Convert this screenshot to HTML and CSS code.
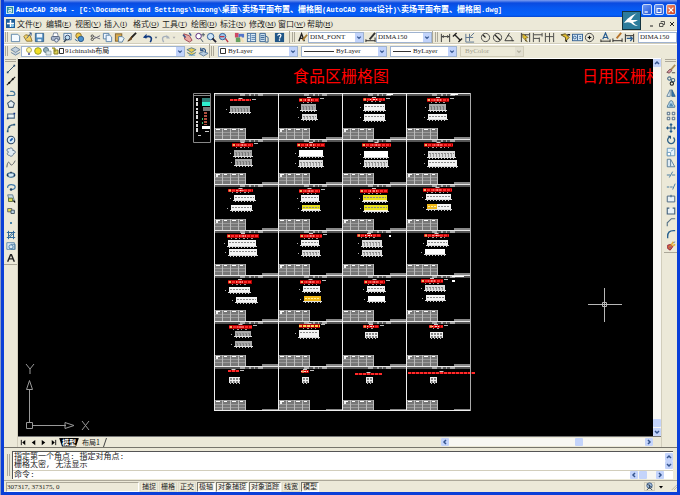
FILE: index.html
```html
<!DOCTYPE html>
<html lang="zh-CN">
<head>
<meta charset="utf-8">
<title>AutoCAD 2004</title>
<link rel="stylesheet" href="styles.css">
</head>
<body>
<div class="window">
  <header class="titlebar">
    <svg class="app-icon" viewBox="0 0 9 9"><rect width="9" height="9" fill="#d9f1f4"/><rect x="1" y="1" width="7" height="7" fill="#2a8fa0"/><path d="M3 3h3v4H3V5h3" fill="none" stroke="#fff"/></svg>
    <h1>AutoCAD 2004 - [C:\Documents and Settings\luzong\<span class="zh">桌面</span>\<span class="zh">卖场平面布置、栅格图</span>(AutoCAD 2004<span class="zh">设计</span>)\<span class="zh">卖场平面布置、栅格图</span>.dwg]</h1>
    <div class="caption-buttons">
      <button aria-label="最小化"><svg viewBox="0 0 10 10"><path d="M2 7.5h4" stroke="#fff" stroke-width="1.6"/></svg></button>
      <button aria-label="最大化"><svg viewBox="0 0 10 10"><path d="M2 3h6M2.500 3v5h5V3" fill="none" stroke="#fff" stroke-width="1.300"/></svg></button>
      <button class="close" aria-label="关闭"><svg viewBox="0 0 10 10"><path d="M2 2l6 6M8 2L2 8" stroke="#fff" stroke-width="1.6"/></svg></button>
    </div>
    <svg class="bird" viewBox="0 0 19 19"><rect width="19" height="19" fill="#14333f"/><rect x="1" y="1" width="17" height="17" fill="#2c7c9c"/><path d="M15 2C8 5 5 8 2 12c3-1 5-1 7 0 2 2 4 3 7 3-2-1-4-2-5-4 2 0 3-1 5-2-3 0-5 0-7 0 2-3 3-5 6-7z" fill="#fff"/></svg>
  </header>

  <nav class="menubar">
    <svg class="doc-icon" viewBox="0 0 9 9"><rect width="9" height="9" fill="#1f5f9c"/><path d="M4.500 1v7M1 4.500h7" stroke="#fff" stroke-width="1.500"/><circle cx="6.500" cy="6.500" r="1.500" fill="#8fd0f0"/></svg>
    <button>文件<i>(<u>F</u>)</i></button><button>编辑<i>(<u>E</u>)</i></button><button>视图<i>(<u>V</u>)</i></button><button>插入<i>(<u>I</u>)</i></button><button>格式<i>(<u>O</u>)</i></button><button>工具<i>(<u>T</u>)</i></button><button>绘图<i>(<u>D</u>)</i></button><button>标注<i>(<u>N</u>)</i></button><button>修改<i>(<u>M</u>)</i></button><button>窗口<i>(<u>W</u>)</i></button><button>帮助<i>(<u>H</u>)</i></button>
    <div class="doc-buttons">
      <button aria-label="最小化文档"><svg viewBox="0 0 6 6"><path d="M1 5h3" stroke="#222"/></svg></button>
      <button aria-label="还原文档"><svg viewBox="0 0 6 6"><path d="M2 1.500V.5h3.500v3H4M.5 2.500H4v3H.5z" fill="none" stroke="#333" stroke-width=".8"/></svg></button>
      <button aria-label="关闭文档"><svg viewBox="0 0 6 6"><path d="M1 1l4 4M5 1L1 5" stroke="#222"/></svg></button>
    </div>
  </nav>

  <div class="toolrow">
    <div class="toolbar standard">
      <span class="grip"></span>
      <button aria-label="新建"><svg viewBox="0 0 12 12"><path d="M1.500 2.500h7l2 2v6h-9z" fill="#f4faff" stroke="#5b83a8"/></svg></button>
      <button aria-label="打开"><svg viewBox="0 0 12 12"><path d="M2 5l2-2 5 1 2 6H5z" fill="#f3d267" stroke="#8d7432"/><path d="M5 7l5-6M8 1h2v3" fill="none" stroke="#3a5a87"/></svg></button>
      <button aria-label="保存"><svg viewBox="0 0 12 12"><path d="M1.500 1.500h9v9h-9z" fill="#4f8cc0" stroke="#36628e"/><path d="M3 2h6v4H3zM4 8h4v2H4z" fill="#eef6fc"/></svg></button>
      <span class="sep"></span>
      <button aria-label="打印"><svg viewBox="0 0 12 12"><path d="M4 1h4l1 4H3z" fill="#fff" stroke="#7b8aa0"/><rect x="1.500" y="5" width="9" height="4" rx="1" fill="#aab8cf" stroke="#52617c"/><circle cx="7" cy="9" r="2" fill="#dce6f4" stroke="#52617c"/></svg></button>
      <button aria-label="打印预览"><svg viewBox="0 0 12 12"><path d="M2 1.500h8v7H2z" fill="#eaf4fc" stroke="#527ca4"/><circle cx="6" cy="6" r="2.500" fill="#bfe0f4" stroke="#346"/><path d="M5 8l-3 3" stroke="#345" stroke-width="1.500"/></svg></button>
      <button aria-label="发布"><svg viewBox="0 0 12 12"><circle cx="5" cy="4" r="3" fill="#edc84a" stroke="#8a6a28"/><circle cx="7.500" cy="7.500" r="3" fill="#4b91cc" stroke="#29598c"/><path d="M1 8l3 2" stroke="#258"/></svg></button>
      <span class="sep"></span>
      <button aria-label="剪切"><svg viewBox="0 0 12 12"><path d="M11 4L4 7.500M11 7.500L4 5" stroke="#667" fill="none"/><circle cx="2.500" cy="4.500" r="1.300" fill="none" stroke="#444"/><circle cx="2.500" cy="8" r="1.300" fill="none" stroke="#444"/></svg></button>
      <button aria-label="复制"><svg viewBox="0 0 12 12"><path d="M1.500 1.500h6v6h-6z" fill="#eef6ff" stroke="#5680a8"/><path d="M4.500 3.500h4l2 2v5h-6z" fill="#eef6ff" stroke="#5680a8"/></svg></button>
      <button aria-label="粘贴"><svg viewBox="0 0 12 12"><rect x="1.500" y="2" width="7" height="8" fill="#d7a94d" stroke="#7e602f"/><path d="M5 5h4l2 2-2 4H5z" fill="#e9f4fb" stroke="#5a7f9f"/></svg></button>
      <button aria-label="特性匹配"><svg viewBox="0 0 12 12"><path d="M11 1L6 6" stroke="#222" stroke-width="2"/><path d="M6 5L2 10l4-2z" fill="#6b4720" stroke="#5b3a15"/></svg></button>
      <span class="sep"></span>
      <button aria-label="放弃"><svg viewBox="0 0 12 12"><path d="M9 11c3-5 0-8-6-5" fill="none" stroke="#123b80" stroke-width="1.800"/><path d="M1 6l4-4v5z" fill="#123b80"/></svg></button>
      <button class="drop" aria-label="放弃列表"><svg viewBox="0 0 12 12"><path d="M4 5h4L6 8z" fill="#567"/></svg></button>
      <button aria-label="重做"><svg viewBox="0 0 12 12"><path d="M4 11c-3-5 0-8 6-5" fill="none" stroke="#a7b0bb" stroke-width="1.500"/><path d="M11 7L7 3v4z" fill="#a7b0bb"/></svg></button>
      <button class="drop" aria-label="重做列表"><svg viewBox="0 0 12 12"><path d="M4 5h4L6 8z" fill="#aaa"/></svg></button>
      <span class="sep"></span>
      <button aria-label="实时平移"><svg viewBox="0 0 12 12"><path d="M2 2l6 2 3 5-3 2-5-3z" fill="#e8a9a2" stroke="#9d4352"/><path d="M1 3l3 3M8 1l2 3" stroke="#35558a" stroke-width="1.500"/></svg></button>
      <button aria-label="实时缩放"><svg viewBox="0 0 12 12"><circle cx="5" cy="4.500" r="3" fill="#fff" stroke="#527"/><path d="M7 7l3 4M10 1v4M8 3h4" stroke="#456"/></svg></button>
      <button aria-label="窗口缩放"><svg viewBox="0 0 12 12"><circle cx="5" cy="5" r="3.500" fill="#cfe6f8" stroke="#2b5a93"/><path d="M7 7l4 4" stroke="#223" stroke-width="2"/></svg></button>
      <button aria-label="缩放上一个"><svg viewBox="0 0 12 12"><circle cx="5" cy="5" r="3.500" fill="#9bc4e8" stroke="#2b5a93"/><path d="M8 7l3 4M2 5h5" stroke="#b34" stroke-width="1.500"/></svg></button>
      <span class="sep"></span>
      <button aria-label="特性"><svg viewBox="0 0 12 12"><path d="M1 1h4v5H1z" fill="#cf4965"/><path d="M5 2h6v4H5z" fill="#5376ca"/><path d="M2 6h5v5H2z" fill="#65a060"/><path d="M7 5l3 6" stroke="#f1dfb6" stroke-width="2"/></svg></button>
      <button aria-label="设计中心"><svg viewBox="0 0 12 12"><rect x="1.500" y="1.500" width="9" height="9" fill="#deedf8" stroke="#3d6998"/><path d="M5 2v9M6 4h4M6 6h4M6 8h4M2 4h2M2 7h2" stroke="#527caa"/></svg></button>
      <button aria-label="工具选项板"><svg viewBox="0 0 12 12"><path d="M2 1.500h6v9H2z" fill="#cfe3f2" stroke="#315e8c"/><path d="M3 4h4M3 6h4M3 8h4M8 4l3 2v5H8" fill="none" stroke="#315e8c"/></svg></button>
      <span class="sep"></span>
      <button aria-label="帮助"><svg viewBox="0 0 12 12"><rect x="1" y="1" width="10" height="10" fill="#205687"/><path d="M4 4c1-3 5-1 3 1L6 7M6 8v1.500" fill="none" stroke="#fff" stroke-width="1.400"/></svg></button>
    </div>
    <div class="toolbar styles">
      <span class="grip"></span>
      <button aria-label="文字样式"><svg viewBox="0 0 12 12"><path d="M2 10L5 2l3 8M3 7h4" fill="none" stroke="#222" stroke-width="1.500"/><path d="M11 3L6 9" stroke="#a77b30" stroke-width="2"/></svg></button>
      <label class="combo"><select aria-label="文字样式"><option>DIM_FONT</option></select><svg class="arrow" viewBox="0 0 9 9"><path d="M2.500 3.500l2 2 2-2" fill="none" stroke="#3b5c94" stroke-width="1.500"/></svg></label>
      <button aria-label="标注样式"><svg viewBox="0 0 12 12"><path d="M1 9.500h10M1 8v3M11 6v5" stroke="#222"/><path d="M11 1L5 8" stroke="#333" stroke-width="2"/></svg></button>
      <label class="combo"><select aria-label="标注样式"><option>DIMA150</option></select><svg class="arrow" viewBox="0 0 9 9"><path d="M2.500 3.500l2 2 2-2" fill="none" stroke="#3b5c94" stroke-width="1.500"/></svg></label>
    </div>
    <div class="toolbar dims">
      <span class="grip"></span>
      <button aria-label="线性标注"><svg viewBox="0 0 12 12"><path d="M1.500 2v9M10.500 2v9M2 5h8M4 3.500L2.500 5 4 6.500M8 3.500L9.500 5 8 6.500" fill="none" stroke="#333"/></svg></button>
      <button aria-label="对齐标注"><svg viewBox="0 0 12 12"><path d="M3 3l6 6M1 5l4-4M7 11l4-4" stroke="#222" stroke-width="1.500"/></svg></button>
      <button aria-label="坐标标注"><svg viewBox="0 0 12 12"><path d="M2 2v9h9M2 6h8M6 2v8M7 5l4-4" fill="none" stroke="#56708c"/></svg></button>
      <span class="sep"></span>
      <button aria-label="半径标注"><svg viewBox="0 0 12 12"><circle cx="6" cy="6" r="4.500" fill="none" stroke="#444"/><path d="M6 6L3 3" stroke="#222" stroke-width="1.400"/></svg></button>
      <button aria-label="直径标注"><svg viewBox="0 0 12 12"><circle cx="6" cy="6" r="4.500" fill="none" stroke="#444"/><path d="M3 3l6 6" stroke="#222" stroke-width="1.400"/></svg></button>
      <button aria-label="角度标注"><svg viewBox="0 0 12 12"><path d="M6 1L1 9.500h10M4 4c3 0 5 2 5 6" fill="none" stroke="#333"/></svg></button>
      <span class="sep"></span>
      <button aria-label="快速标注"><svg viewBox="0 0 12 12"><path d="M1.500 1v10M10.500 1v10M2 3h8M6 3v7" stroke="#333"/><path d="M3 2l6 4-3 1 2 4-5-5z" fill="#e1bd31" stroke="#554a20" stroke-width=".6"/></svg></button>
      <button aria-label="基线标注"><svg viewBox="0 0 12 12"><path d="M1.500 1v10M2 3h9M2 7h6M8 6v5M11 1v4" fill="none" stroke="#444"/></svg></button>
      <button aria-label="连续标注"><svg viewBox="0 0 12 12"><path d="M1.500 1v10M6 1v10M10.500 1v10M2 5h8" stroke="#444"/></svg></button>
      <span class="sep"></span>
      <button aria-label="快速引线"><svg viewBox="0 0 12 12"><path d="M1 3l5-1 4 4-4 4V6z" fill="#e1bd31" stroke="#554a20"/><path d="M8 3h3M7 9v2" stroke="#222" stroke-width="1.500"/></svg></button>
      <button aria-label="公差"><svg viewBox="0 0 12 12"><rect x=".5" y="2.500" width="11" height="7" fill="#d6e9f7" stroke="#335f91"/><circle cx="3" cy="6" r="1.500" fill="none" stroke="#335f91"/><path d="M6 3v6M8 5h2M8 7h2" stroke="#335f91"/></svg></button>
      <button aria-label="圆心标记"><svg viewBox="0 0 12 12"><circle cx="6" cy="6" r="4.500" fill="none" stroke="#444"/><path d="M6 4v4M4 6h4" stroke="#111" stroke-width="1.300"/></svg></button>
      <span class="sep"></span>
      <button aria-label="编辑标注"><svg viewBox="0 0 12 12"><path d="M3 8l3-7 3 7M4 6h4" fill="none" stroke="#285c91" stroke-width="1.300"/><path d="M1 8v3M11 8v3M1 10h10" stroke="#222"/></svg></button>
      <button aria-label="编辑标注文字"><svg viewBox="0 0 12 12"><path d="M10 1L5 7" stroke="#b7742d" stroke-width="2"/><path d="M1 7v4M11 7v4M1 9.500h10" stroke="#222"/></svg></button>
      <button aria-label="标注更新"><svg viewBox="0 0 12 12"><path d="M1.500 2v9M10.500 2v9M2 4h8" stroke="#222"/><path d="M3 7h6M7 5l2 2-2 3" fill="none" stroke="#285c91" stroke-width="1.500"/></svg></button>
      <label class="combo last"><select aria-label="标注样式控制"><option>DIMA150</option></select></label>
    </div>
  </div>

  <div class="toolrow props">
    <div class="toolbar layers">
      <span class="grip"></span>
      <button aria-label="图层特性"><svg viewBox="0 0 12 12"><path d="M1 4l5-3 5 3-5 3zM1 7l5 3 5-3" fill="#c0cfdc" stroke="#70879c"/></svg></button>
      <label class="combo">
        <svg class="layer-state" viewBox="0 0 40 10"><circle cx="5" cy="4" r="2.500" fill="#fff8a2" stroke="#a39642" stroke-width=".8"/><path d="M4 7h2v2H4z" fill="#77a"/><circle cx="14" cy="5" r="3.300" fill="#f2df26" stroke="#97a023"/><circle cx="22" cy="4" r="2.500" fill="#95b3bf" stroke="#5e7986"/><path d="M22 5h5v4h-5z" fill="#dce7e9" stroke="#7e9296" stroke-width=".7"/><path d="M28 2h3v4M30 4h4v4h-4z" fill="#dcd258" stroke="#867d25"/><path d="M35.500 2.500h4v5h-4z" fill="#fff" stroke="#333"/></svg>
        <select aria-label="图层"><option>91chinalsh布局</option></select><svg class="arrow" viewBox="0 0 9 9"><path d="M2.500 3.500l2 2 2-2" fill="none" stroke="#3b5c94" stroke-width="1.500"/></svg></label>
      <button aria-label="将对象的图层置为当前"><svg viewBox="0 0 12 12"><path d="M1 4l5-2 5 2-5 3zM1 7l5 3 5-3" fill="#e8cd54" stroke="#557b92"/><path d="M3 10h7" stroke="#5c9cc6"/></svg></button>
      <button aria-label="上一个图层"><svg viewBox="0 0 12 12"><path d="M1 8l5-2 5 2-5 3z" fill="#b6cce0" stroke="#637f9a"/><path d="M8 7c1-4-2-5-4-3M3 2v3h3" fill="none" stroke="#2d5588" stroke-width="1.300"/></svg></button>
    </div>
    <div class="toolbar object-props">
      <span class="grip"></span>
      <label class="combo color"><svg class="swatch" viewBox="0 0 7 7"><path d="M.5.5h5v5h-5z" fill="#fff" stroke="#333"/></svg><select aria-label="颜色"><option>ByLayer</option></select><svg class="arrow" viewBox="0 0 9 9"><path d="M2.500 3.500l2 2 2-2" fill="none" stroke="#3b5c94" stroke-width="1.500"/></svg></label>
      <label class="combo linetype"><span class="rule"></span><select aria-label="线型"><option>ByLayer</option></select><svg class="arrow" viewBox="0 0 9 9"><path d="M2.500 3.500l2 2 2-2" fill="none" stroke="#3b5c94" stroke-width="1.500"/></svg></label>
      <label class="combo weight"><span class="rule"></span><select aria-label="线宽"><option>ByLayer</option></select><svg class="arrow" viewBox="0 0 9 9"><path d="M2.500 3.500l2 2 2-2" fill="none" stroke="#3b5c94" stroke-width="1.500"/></svg></label>
      <label class="combo disabled"><select aria-label="打印样式" disabled><option>ByColor</option></select><svg class="arrow" viewBox="0 0 9 9"><path d="M2.500 3.500l2 2 2-2" fill="none" stroke="#b5b2a0" stroke-width="1.500"/></svg></label>
    </div>
  </div>

  <main class="workspace">
    <aside class="dock draw">
      <div class="palette">
        <span class="hgrip"></span>
        <button aria-label="直线"><svg viewBox="0 0 12 12"><path d="M2 10l8-8" stroke="#35556f" stroke-width="1.200"/><path d="M1 10h2M9 2h2" stroke="#246" stroke-width="2"/></svg></button>
        <button aria-label="构造线"><svg viewBox="0 0 12 12"><path d="M1 11L11 1" stroke="#222" stroke-width="1.400"/><circle cx="4" cy="8" r="1.200"/><circle cx="8" cy="4" r="1.200"/></svg></button>
        <button aria-label="多段线"><svg viewBox="0 0 12 12"><path d="M1 9h7c4 0 3-4 0-5H5" fill="none" stroke="#45789b" stroke-width="1.400"/><circle cx="2" cy="9" r="1.200" fill="#246"/></svg></button>
        <button aria-label="正多边形"><svg viewBox="0 0 12 12"><path d="M6 2l4 3-1.500 5h-5L2 5z" fill="#e4edf2" stroke="#3f566c" stroke-width="1.300"/></svg></button>
        <button aria-label="矩形"><svg viewBox="0 0 12 12"><path d="M2 3.500h8v5H2z" fill="#e8f2f7" stroke="#486580" stroke-width="1.300"/><path d="M1 9h2M9 3h2" stroke="#138" stroke-width="2"/></svg></button>
        <button aria-label="圆弧"><svg viewBox="0 0 12 12"><path d="M2 10c0-5 3-8 8-8" fill="none" stroke="#3c6486" stroke-width="1.400"/><path d="M1 10h2M9 2h2M3 5h2" stroke="#257" stroke-width="2"/></svg></button>
        <button aria-label="圆"><svg viewBox="0 0 12 12"><circle cx="6" cy="6" r="4.500" fill="#dcedf8" stroke="#324b67" stroke-width="1.300"/><path d="M5 7l3-3" stroke="#1759ac" stroke-width="2"/></svg></button>
        <button aria-label="修订云线"><svg viewBox="0 0 12 12"><path d="M3 6C0 5 1 1 4 2c2-2 5 0 4 2 4 0 4 4 1 4 0 3-4 4-5 2-3 0-3-3-1-4z" fill="#e1ecf3" stroke="#60788f" stroke-width="1.200"/></svg></button>
        <button aria-label="样条曲线"><svg viewBox="0 0 12 12"><path d="M1 10c1-9 3-6 4-4s3 2 6-4" fill="none" stroke="#5e6468" stroke-width="1.200"/></svg></button>
        <button aria-label="椭圆"><svg viewBox="0 0 12 12"><ellipse cx="6" cy="6" rx="4.500" ry="2.700" fill="#d4e9f6" stroke="#275a80" stroke-width="1.300"/><path d="M1 6h2M9 6h2M6 2v2" stroke="#124" stroke-width="1.500"/></svg></button>
        <button aria-label="椭圆弧"><svg viewBox="0 0 12 12"><path d="M2 7c-1-5 9-5 9-1 0 3-3 3-5 3" fill="none" stroke="#4079a8" stroke-width="1.500"/><circle cx="6" cy="9" r="1.500" fill="#246"/></svg></button>
        <button aria-label="插入块"><svg viewBox="0 0 12 12"><path d="M2 1h6l2 7H4z" fill="#cbdde6" stroke="#547288"/><path d="M3 5h5v4H3z" fill="#ddd854" stroke="#4b6030"/><path d="M8 8l3 3V8z"/></svg></button>
        <button aria-label="创建块"><svg viewBox="0 0 12 12"><path d="M2 3h5v4H2z" fill="#e5de4f" stroke="#556"/><path d="M6 5h4v4H6z" fill="#b9d2e1" stroke="#345"/></svg></button>
        <button aria-label="点"><svg viewBox="0 0 12 12"><circle cx="6" cy="6" r="1.200" fill="#15659d"/></svg></button>
        <button aria-label="图案填充"><svg viewBox="0 0 12 12"><path d="M3 1v10M9 1v10M1 3h10M1 9h10M3 8l5-5M4 9l5-5" stroke="#326b9b" stroke-width="1.200"/></svg></button>
        <button aria-label="面域"><svg viewBox="0 0 12 12"><path d="M1 2h9v8H1z" fill="#dbeaf4" stroke="#517fa5"/><circle cx="6" cy="7" r="2.500" fill="none" stroke="#356d9d"/><path d="M6 4h5v6H6" fill="none" stroke="#517fa5"/></svg></button>
        <button aria-label="多行文字"><svg viewBox="0 0 12 12"><path d="M2 10.500L5.500 2h1L10 10.500M4 7h4" fill="none" stroke="#222" stroke-width="1.700"/></svg></button>
      </div>
    </aside>

    <section class="document">
      <div class="view">
        <svg id="model" class="model" viewBox="18 59 635 379" preserveAspectRatio="xMinYMin slice">
          <text class="caption" x="293" y="82">食品区栅格图</text>
          <text class="caption" x="582" y="82">日用区栅格图</text>
          <g id="sheets"></g>
          <g class="ucs"><path d="M26.500 422.500h6v6h-6zM29.500 422V389M33 425.500h33M26.500 389.500l3-9 3 9zM65 422.500l9 3-9 3z"/><path d="M26 364l4 5 4-5M30 369v5M82 421l7 9M89 421l-7 9"/></g>
          <path class="cursor" d="M588 304.500h34M604.500 288v34M602.500 302.500h4v4h-4z"/>
        </svg>
        <div class="vscroll"><button class="sb" aria-label="向上"><svg viewBox="0 0 8 8"><path d="M2 5l2-2 2 2" fill="none" stroke="#35558f" stroke-width="1.500"/></svg></button><span class="fill"></span><button class="sb thumb" aria-label="滑块"></button><button class="sb" aria-label="向下"><svg viewBox="0 0 8 8"><path d="M2 3l2 2 2-2" fill="none" stroke="#35558f" stroke-width="1.500"/></svg></button></div>
      </div>
      <div class="tabs">
        <button class="nav" aria-label="第一个"><svg viewBox="0 0 8 8"><path d="M1.500 1v6" stroke="#000"/><path d="M6 1v6L2.500 4z"/></svg></button>
        <button class="nav" aria-label="上一个"><svg viewBox="0 0 8 8"><path d="M6 1v6L2 4z"/></svg></button>
        <button class="nav" aria-label="下一个"><svg viewBox="0 0 8 8"><path d="M2 1v6l4-3z"/></svg></button>
        <button class="nav" aria-label="最后一个"><svg viewBox="0 0 8 8"><path d="M6.500 1v6" stroke="#000"/><path d="M2 1v6l3.500-3z"/></svg></button>
        <button class="tab active">模型</button><button class="tab">布局1</button><svg class="tab-edge" viewBox="0 0 4 9"><path d="M3.500 0L.5 9" stroke="#444"/></svg>
        <div class="hscroll"><button class="sb" aria-label="向左"><svg viewBox="0 0 8 8"><path d="M5 2L3 4l2 2" fill="none" stroke="#35558f" stroke-width="1.500"/></svg></button><span class="before"></span><button class="sb thumb" aria-label="滑块"></button><span class="after"></span><button class="sb" aria-label="向右"><svg viewBox="0 0 8 8"><path d="M3 2l2 2-2 2" fill="none" stroke="#35558f" stroke-width="1.500"/></svg></button></div>
      </div>
    </section>

    <aside class="dock modify">
      <div class="palette">
        <span class="hgrip"></span>
        <button aria-label="删除"><svg viewBox="0 0 12 12"><path d="M11 1L5 8" stroke="#a68d58" stroke-width="2"/><path d="M5 6l2 2-3 3-3-1z" fill="#d5929b" stroke="#6b4349"/><path d="M7 10.500h4" stroke="#333"/></svg></button>
        <button aria-label="复制对象"><svg viewBox="0 0 12 12"><circle cx="4" cy="3" r="2" fill="none" stroke="#456b89" stroke-width="1.300"/><circle cx="8.500" cy="5" r="2" fill="none" stroke="#456b89" stroke-width="1.300"/><circle cx="7" cy="9" r="2" fill="none" stroke="#222" stroke-width="1.300"/></svg></button>
        <button aria-label="镜像"><svg viewBox="0 0 12 12"><path d="M5 2v8H1z" fill="#f2f7f9" stroke="#4d7796"/><path d="M7 2v8h4z" fill="#367db3" stroke="#295780"/></svg></button>
        <button aria-label="偏移"><svg viewBox="0 0 12 12"><path d="M1.500 10c0-4 2-3 2-5 1-4 5-4 5 0 0 2 3 2 2 5z" fill="#b5d6e9" stroke="#426d8c"/><path d="M4 9c0-2 1-4 2-4s2 2 3 4z" fill="#528bb4"/></svg></button>
        <button aria-label="阵列"><svg viewBox="0 0 12 12"><path d="M1.500 1.500h3v3h-3zM7.500 1.500h3v3h-3zM1.500 7.500h3v3h-3zM7.500 7.500h3v3h-3z" fill="#eef4f8" stroke="#3b5974"/></svg></button>
        <button aria-label="移动"><svg viewBox="0 0 12 12"><path d="M6 1v10M1 6h10M4.500 2.500L6 1l1.500 1.500M4.500 9.500L6 11l1.500-1.500M2.500 4.500L1 6l1.500 1.500M9.500 4.500L11 6 9.500 7.500" fill="none" stroke="#255b87" stroke-width="1.300"/></svg></button>
        <button aria-label="旋转"><svg viewBox="0 0 12 12"><path d="M4 2.500A4.200 4.200 0 1 0 9 3" fill="none" stroke="#2d6187" stroke-width="1.600"/><path d="M2 1h4v4z" fill="#234f75"/></svg></button>
        <button aria-label="缩放"><svg viewBox="0 0 12 12"><path d="M1.500 1.500h9v9h-9z" fill="#e8f4fb" stroke="#578eb6"/><path d="M1.500 6.500h4v4h-4z" fill="#fff" stroke="#578eb6"/><path d="M6 5l3-2" stroke="#578eb6"/></svg></button>
        <button aria-label="拉伸"><svg viewBox="0 0 12 12"><path d="M1.500 1.500h4l5 9h-9z" fill="#dfebf2" stroke="#4b718f"/><path d="M5.500 2v8" stroke="#4b718f"/></svg></button>
        <button aria-label="修剪"><svg viewBox="0 0 12 12"><path d="M1 6h4M7 6h4M4 9l4-7" stroke="#4f80a3" stroke-width="1.200"/></svg></button>
        <button aria-label="延伸"><svg viewBox="0 0 12 12"><path d="M1 6h3M5 6h3M8 9l3-7" stroke="#4f80a3" stroke-width="1.200"/></svg></button>
        <button aria-label="打断于点"><svg viewBox="0 0 12 12"><path d="M1.500 2.500h9v7h-9z" fill="#e9f1f5" stroke="#526c84" stroke-width="1.200"/><path d="M6 1v3" stroke="#258"/></svg></button>
        <button aria-label="打断"><svg viewBox="0 0 12 12"><path d="M4 2.500H1.500v7h9v-7H8" fill="#e9f1f5" stroke="#415f7b" stroke-width="1.300"/></svg></button>
        <button aria-label="倒角"><svg viewBox="0 0 12 12"><path d="M1.500 11V7l5-5H11" fill="none" stroke="#536f85" stroke-width="1.300"/></svg></button>
        <button aria-label="圆角"><svg viewBox="0 0 12 12"><path d="M2 11V9c0-5 2-7 7-7h2" fill="none" stroke="#28618f" stroke-width="1.600"/></svg></button>
        <button aria-label="分解"><svg viewBox="0 0 12 12"><path d="M2 5l4-1 2 3-3 4-3-2z" fill="#d96c3f" stroke="#813"/><path d="M6 5l3-4M8 6l3-2" stroke="#e0b13a" stroke-width="2"/><path d="M9 2l2-1M4 8h2" stroke="#46a"/></svg></button>
      </div>
    </aside>
  </main>

  <section class="command">
    <span class="grip"></span>
    <div class="console">
      <div class="history"><p>指定第一个角点: 指定对角点:<br>栅格太密, 无法显示</p><div class="mini"><button class="sb" aria-label="上滚"><svg viewBox="0 0 8 8"><path d="M2 5l2-2 2 2" fill="none" stroke="#35558f" stroke-width="1.500"/></svg></button><button class="sb" aria-label="下滚"><svg viewBox="0 0 8 8"><path d="M2 3l2 2 2-2" fill="none" stroke="#35558f" stroke-width="1.500"/></svg></button></div></div>
      <div class="prompt"><label for="cmd">命令:</label><input id="cmd" type="text"><div class="mini-h"><button class="sb" aria-label="左滚"><svg viewBox="0 0 8 8"><path d="M5 2L3 4l2 2" fill="none" stroke="#35558f" stroke-width="1.500"/></svg></button><button class="sb thumb" aria-label="滑块"></button><span class="fill"></span><button class="sb" aria-label="右滚"><svg viewBox="0 0 8 8"><path d="M3 2l2 2-2 2" fill="none" stroke="#35558f" stroke-width="1.500"/></svg></button></div></div>
    </div>
  </section>

  <footer class="status">
    <output>307317, 373175, 0</output>
    <div class="modes"><button>捕捉</button><button>栅格</button><button>正交</button><button class="on">极轴</button><button class="on">对象捕捉</button><button class="on">对象追踪</button><button>线宽</button><button class="on">模型</button></div>
    <button class="tray" aria-label="通讯中心"><svg viewBox="0 0 10 10"><circle cx="5" cy="4" r="3" fill="#a9c3df" stroke="#3a5a87"/><path d="M5 3v4M2 9l3-3 3 3M2 2l6 4" fill="none" stroke="#345"/></svg></button>
    <button class="tray-menu" aria-label="状态栏菜单"><svg viewBox="0 0 6 6"><path d="M1 2h4L3 4.500z"/></svg></button>
    <svg class="resize" viewBox="0 0 8 8"><path d="M1 8l7-7M4 8l4-4" stroke="#aaa58e"/></svg>
  </footer>
</div>
<script src="drawing.js"></script>
</body>
</html>
```

FILE: styles.css
```css
:root {
  --face: #ece9d8;
  --edge: #aca899;
  --frame: #0a3fd8;
  --zh: "Liberation Mono", "Noto Sans CJK SC", monospace;
  --small: "Liberation Serif", "Noto Sans CJK SC", serif;
}

* { box-sizing: border-box; }

body {
  margin: 0;
  background: #8d9cc4;
  color: #222;
  font: 8px/8px var(--zh);
}

button {
  padding: 0;
  border: 0;
  background: none;
  color: inherit;
  font: inherit;
  display: flex;
  align-items: center;
  justify-content: center;
}

svg { display: block; }

.window {
  display: flex;
  flex-direction: column;
  height: 100vh;
  margin-left: 1px;
  border: solid var(--frame);
  border-width: 0 3px 3px;
  background: var(--face);
}

/* Title and menu */
.titlebar {
  position: relative;
  display: flex;
  align-items: center;
  gap: 2px;
  height: 17px;
  flex: none;
  padding: 2px 1px 0 2px;
  background: linear-gradient(#7d9df0 0, #0a4be0 3px, #0858f0 8px, #0560fa 15px, #0846d0 17px);
  color: #fff;
}
.app-icon { width: 8px; height: 8px; }
.titlebar h1 {
  flex: 1;
  margin: 0;
  font: bold 7px/12px "Liberation Mono", monospace;
  white-space: pre;
}
.titlebar .zh { font: bold 8px/12px "Noto Sans CJK SC", sans-serif; }
.caption-buttons { display: flex; gap: 2px; }
.caption-buttons button {
  width: 10px;
  height: 11px;
  border: 1px solid #c9d8f8;
  border-radius: 2px;
  background: linear-gradient(135deg, #6f9af5, #2456d8);
}
.caption-buttons .close { background: linear-gradient(135deg, #f09070, #cf3a15); }
.caption-buttons svg { width: 8px; height: 8px; }
.bird { position: absolute; right: 36px; top: 11px; width: 19px; height: 19px; z-index: 1; }

.menubar {
  display: flex;
  align-items: center;
  height: 13px;
  flex: none;
  padding-left: 2px;
}
.doc-icon { width: 9px; height: 9px; margin-right: 2px; }
.menubar > button { width: 29px; justify-content: flex-start; font-family: "Noto Sans CJK SC", sans-serif; }
.menubar i { font: 7px/8px var(--small); }
.doc-buttons { display: flex; gap: 4px; margin-left: auto; padding-right: 2px; }
.doc-buttons svg { width: 6px; height: 6px; }

/* Toolbars */
.toolrow {
  display: flex;
  height: 13px;
  flex: none;
  border-top: 1px solid #d2cebc;
  box-shadow: inset 0 1px #fff;
}
.toolrow.props { height: 15px; }
.toolbar { display: flex; align-items: center; }
.toolbar button { width: 12px; height: 12px; flex: none; }
.toolbar button svg { width: 11px; height: 11px; }
.toolbar .drop { width: 6px; }
.toolbar .drop svg { width: 8px; flex: none; }
.grip {
  width: 3px;
  height: 10px;
  flex: none;
  margin: 0 1px;
  border: solid var(--edge);
  border-width: 0 1px;
}
.sep { width: 4px; flex: none; }
.standard { width: 286px; border-right: 1px solid var(--edge); }
.styles { width: 143px; border-right: 1px solid var(--edge); padding-left: 1px; }
.styles .combo { flex: 1; }
.dims { flex: 1; padding-left: 1px; }
.dims .last { flex: 1; margin-left: 3px; }
.layers { width: 206px; border-right: 1px solid var(--edge); }
.layers .combo { flex: 1; }
.object-props { gap: 3px; }

.combo {
  display: flex;
  align-items: center;
  min-width: 0;
  height: 11px;
  border: 1px solid #9fb3d0;
  background: #fff;
}
.combo select {
  flex: 1;
  min-width: 0;
  height: 9px;
  padding: 0 1px;
  border: 0;
  background: none;
  appearance: none;
  color: #222;
  font: 7px/9px var(--small);
}
.arrow { width: 8px; height: 9px; flex: none; background: #c1d3fb; }
.layer-state { width: 40px; height: 10px; flex: none; margin-left: 2px; }
.swatch { width: 7px; height: 7px; margin-left: 1px; }
.rule { height: 1px; background: #333; margin: 0 1px 0 2px; }
.color { width: 80px; }
.linetype { width: 86px; }
.linetype .rule { width: 30px; }
.weight { width: 67px; }
.weight .rule { width: 18px; }
.disabled { width: 64px; border-color: #d0ccb8; background: var(--face); }
.disabled select { color: #a5a290; padding-left: 4px; opacity: 1; }
.disabled .arrow { background: #e2dfd0; }

/* Drawing area */
.workspace { flex: 1; display: flex; min-height: 0; }
.dock { flex: none; background: var(--face); }
.draw { width: 14px; border-right: 1px solid #d2cebc; }
.modify { width: 16px; padding-left: 2px; border-left: 1px solid #d2cebc; }
.palette {
  display: flex;
  flex-direction: column;
  height: 207px;
  border-bottom: 1px solid var(--edge);
}
.modify .palette { height: 195px; }
.hgrip { height: 3px; flex: none; margin: 1px; border: solid var(--edge); border-width: 1px 0; }
.palette button { flex: 1; min-height: 0; }
.palette svg { width: 10px; height: 10px; }

.document { flex: 1; display: flex; flex-direction: column; min-width: 0; }
.view { flex: 1; display: flex; min-height: 0; border-top: 1px solid #fff; }
.model { flex: 1; min-width: 0; height: 100%; background: #000; }
.caption { fill: #f00; font: 16px "Noto Sans CJK SC", sans-serif; }
.ucs path { fill: none; stroke: #999; }
.cursor { fill: none; stroke: #b8b8b8; }

.sb { width: 8px; height: 8px; flex: none; border-radius: 1px; background: #c4d4fb; }
.sb svg { width: 8px; height: 8px; }
.fill { flex: 1; }
.vscroll { display: flex; flex-direction: column; width: 8px; background: #f8f7f2; }
.vscroll .thumb { margin-bottom: 1px; }

.tabs { display: flex; height: 11px; flex: none; align-items: center; border-top: 1px solid #777; }
.nav { width: 10px; height: 9px; }
.nav svg { width: 7px; height: 7px; }
.tab {
  height: 9px;
  padding: 0 3px;
  background: var(--face);
  clip-path: polygon(0 0, 100% 0, calc(100% - 3px) 100%, 3px 100%);
  font: 7px/9px "Noto Sans CJK SC", sans-serif;
}
.tab.active { background: #000; color: #fff; margin-left: 1px; font-weight: bold; }
.tab-edge { width: 4px; height: 9px; }
.hscroll {
  display: flex;
  width: 33%;
  margin: 0 8px 0 auto;
  background: #f8f7f2;
}
.hscroll .before { flex: 129; }
.hscroll .after { flex: 63; }

/* Command line */
.command {
  display: flex;
  flex: none;
  padding: 3px 4px 1px 2px;
  border-top: 1px solid #77756b;
}
.command .grip { height: 22px; margin-top: 3px; margin-right: 2px; }
.console { flex: 1; border: solid #555; border-width: 1px 0 0 1px; background: #fff; font: 8px/8px var(--zh); }
.history { display: flex; justify-content: space-between; height: 18px; padding-top: 1px; }
.history p { margin: 0; padding-left: 1px; }
.prompt { display: flex; align-items: center; height: 9px; border-top: 1px solid #d2cebc; }
.prompt label { padding-left: 1px; }
.prompt input { flex: 1; min-width: 0; height: 8px; padding: 0; border: 0; outline: 0; font: inherit; }
.mini-h { display: flex; width: 34px; margin-right: 9px; background: #f8f7f2; }
.mini-h .thumb { margin-left: 1px; }

.status {
  display: flex;
  align-items: center;
  height: 12px;
  flex: none;
  padding-left: 2px;
  border-top: 1px solid var(--edge);
  font: 7px/9px "Noto Sans CJK SC", sans-serif;
}
.status output { width: 133px; border: 1px solid; border-color: var(--edge) #fff #fff var(--edge); font: 7px/8px var(--small); }
.modes { display: flex; gap: 1px; margin-left: 1px; flex: 1; }
.modes button { height: 10px; padding: 0 1px; border: 1px solid #dedac8; white-space: nowrap; }
.modes .on { border-color: #77756b #fff #fff #77756b; background: #f5f3ea; }
.tray { width: 11px; height: 9px; border: 1px solid #d2cebc; }
.tray svg { width: 9px; height: 9px; }
.tray-menu { width: 12px; }
.tray-menu svg, .resize { width: 6px; height: 6px; }
.resize { margin-left: 4px; }
```

FILE: drawing.js
```js
// Model space content: a 4 x 7 array of drawing sheets.
// Every sheet lists one sign strip and its shelf elevations as [x, y, width, height, style].
const sheets = [
  [[230,99,21,2,'r'],[230,106,20,7,'g']],
  [[299,98,20,4,'r'],[301,104,15,7,'g'],[302,114,15,6,'h']],
  [[363,98,22,3,'r'],[364,104,21,7,'w'],[364,114,21,7,'w']],
  [[427,98,22,4,'r'],[429,104,17,7,'g'],[428,114,19,6,'w']],
  [[232,143,21,4,'r'],[234,150,18,7,'g'],[235,159,17,7,'g']],
  [[297,143,28,4,'r'],[299,150,24,7,'s'],[299,160,24,7,'h']],
  [[362,143,29,4,'r'],[364,151,24,7,'s'],[364,160,24,7,'h']],
  [[424,143,29,4,'r'],[428,151,27,7,'h'],[428,160,29,7,'w']],
  [[228,189,25,3,'r'],[234,195,21,6,'w'],[231,205,21,6,'w']],
  [[299,189,21,4,'r'],[301,195,18,7,'w'],[302,205,18,6,'y']],
  [[360,189,28,4,'r'],[363,195,24,7,'y'],[364,205,24,7,'y']],
  [[423,188,29,4,'r'],[426,194,25,6,'w'],[427,204,10,6,'o'],[437,204,14,6,'w']],
  [[227,234,32,4,'r'],[228,240,28,7,'w'],[229,249,28,7,'w']],
  [[300,234,22,4,'r'],[301,240,18,6,'w'],[302,250,18,6,'h']],
  [[357,234,24,3,'r'],[362,240,20,7,'h'],[362,250,20,6,'h']],
  [[424,234,25,3,'r'],[427,240,21,6,'w'],[425,249,20,6,'s']],
  [[228,280,24,4,'r'],[229,287,21,6,'w'],[236,297,21,6,'w']],
  [[300,280,21,4,'r'],[303,286,17,6,'w'],[304,296,17,6,'o']],
  [[364,280,21,4,'r'],[367,286,18,6,'w'],[368,296,17,6,'s']],
  [[421,279,22,4,'r'],[425,285,20,6,'h'],[426,295,19,6,'w']],
  [[229,325,23,4,'r'],[235,331,16,6,'g'],[235,341,17,6,'g']],
  [[299,324,21,4,'ry'],[299,330,20,8,'w']],
  [[363,325,16,3,'r'],[365,332,13,6,'c']],
  [[429,325,14,3,'r'],[430,332,13,6,'c']],
  [[228,370,11,2,'r'],[229,377,11,6,'c']],
  [[301,370,8,3,'r'],[302,377,7,6,'c']],
  [[355,373,27,2,'r'],[366,377,7,6,'c']],
  [[408,372,67,2,'r'],[430,377,7,6,'c']]
];
const columns = [214, 278, 342, 406, 470];
const rows = [93, 139, 184, 230, 275, 321, 366, 411];
const parts = [];
const rect = (x, y, w, h, fill) => parts.push(`<rect x="${x}" y="${y}" width="${w}" height="${h}" fill="${fill}"/>`);
const line = (d, stroke, extra = '') => parts.push(`<path d="${d}" fill="none" stroke="${stroke}" ${extra}/>`);

function sign(x, y, w, h, style) {
  const mid = y + h / 2;
  rect(x, y, w, h, h > 2 ? '#b00000' : '#8a0000');
  line(`M${x} ${mid}h${w}`, style === 'ry' ? '#ffd24a' : '#ff2a2a', `stroke-width="${h > 2 ? 2 : h}" stroke-dasharray="3 1"`);
  if (h > 2) {
    line(`M${x + 1} ${mid}h2`, '#f0b060', 'stroke-width="2"');
    line(`M${x + w / 2 - 4} ${mid}h9`, '#ffd8c8', 'stroke-dasharray="1 2 2 1"');
    line(`M${x + 4} ${y + h + .5}h${w - 8}`, '#a99', 'stroke-dasharray="1 3 2 2"');
  }
  line(`M${x + w / 2 - 2} ${y - .5}h4`, '#ccc');
  if (w < 24) line(`M${x + w + 1} ${y + .5}h4`, '#bbb');
}

function shelf(x, y, w, h, style) {
  const fill = { w: '#f4f4f4', s: '#fff', h: '#ddd', g: '#aaa', c: '#888', y: '#e8e020', o: '#f0b818' }[style];
  rect(x, y, w, h, fill);
  if (style !== 's') line(`M${x + 1} ${y + 2.5}h${w - 2}`, style === 'o' ? '#fff0a0' : '#888', 'stroke-dasharray="2 1"');
  if (style === 'g' || style === 'h') line(`M${x + 2} ${y + 4.5}h${w - 3}`, style === 'g' ? '#777' : '#999', `stroke-width="${h - 3}" stroke-dasharray="1 2"`);
  if (style === 'c') {
    line(`M${x} ${y + .5}h${w}M${x} ${y + 3.5}h${w}`, '#eee');
    line(`M${x} ${y + 3}h${w}`, '#eee', `stroke-width="${h}" stroke-dasharray="1 2"`);
  }
  if (style === 'y') rect(x, y + h - 2, w, 2, '#fff8d0');
  line(`M${x + 1} ${y + h + .5}h${w - 1}`, '#ccc', 'stroke-dasharray="1 2"');
  if (style !== 'c') {
    line(`M${x - 1} ${y + h - .5}h${w + 2}`, '#ddd');
    line(`M${x - 4} ${y + 3.5}h1`, '#aaa');
  }
}

sheets.forEach((items, i) => {
  const x = columns[i % 4], row = Math.floor(i / 4), y = rows[row], bottom = rows[row + 1];
  rect(x, y, 64, 3, '#555');
  line(`M${x} ${y + .5}h64`, '#e8e8e8');
  line(`M${x + 26} ${y + 2}h24`, '#fff', 'stroke-dasharray="5 4 2 3 1 3"');
  rect(x, bottom - 11, 32, 11, '#777');
  line(`M${x} ${bottom - 10.5}h32M${x} ${bottom - 6.5}h32M${x} ${bottom - 3.500}h32`, '#999');
  line(`M${x + 8.5} ${bottom - 11}v11M${x + 16.5} ${bottom - 11}v11M${x + 24.5} ${bottom - 11}v11M${x + 31.5} ${bottom - 11}v11`, '#bbb');
  line(`M${x + 2} ${bottom - 9.5}h28`, '#fff', 'stroke-dasharray="4 4 3 5"');
  if (i % 3 !== 0) rect(x + 2, bottom - 9, 2, 2, '#eee');
  rect(x + 48, bottom - 2, 16, 2, '#888');
  items.forEach(([px, py, w, h, style]) => (style[0] === 'r' ? sign : shelf)(px, py, w, h, style));
});
columns.forEach((x, i) => line(`M${x + .5} 93v318`, i === 4 ? '#aaa' : '#eee'));
line('M214 410.500h256', '#eee');
rect(387, 94, 6, 1, '#fff');
rect(451, 94, 7, 1, '#fff');
rect(452, 276, 12, 1, '#fff');
rect(452, 280, 3, 2, '#fff');
rect(389, 235, 2, 2, '#fff');

// Legend beside the first sheet
line('M193.500 93.500h17v49h-17zM194 95.500h16', '#888');
line('M197 98v34', '#ddd', 'stroke-width="2" stroke-dasharray="3 1 4 2 2 1"');
rect(202, 98, 8, 4, '#2f7f78');
rect(202, 102, 8, 4, '#2ff0d0');
rect(203, 107, 7, 4, '#777');
line('M205.500 112v13', '#b05040', 'stroke-width="3" stroke-dasharray="2 1"');
line('M202.500 118v8', '#38c070', 'stroke-dasharray="2 2"');
rect(202, 126, 8, 3, '#fff');
line('M205 131.500h4M198 135.500h3', '#ccc');

document.getElementById('sheets').innerHTML = parts.join('');
```
